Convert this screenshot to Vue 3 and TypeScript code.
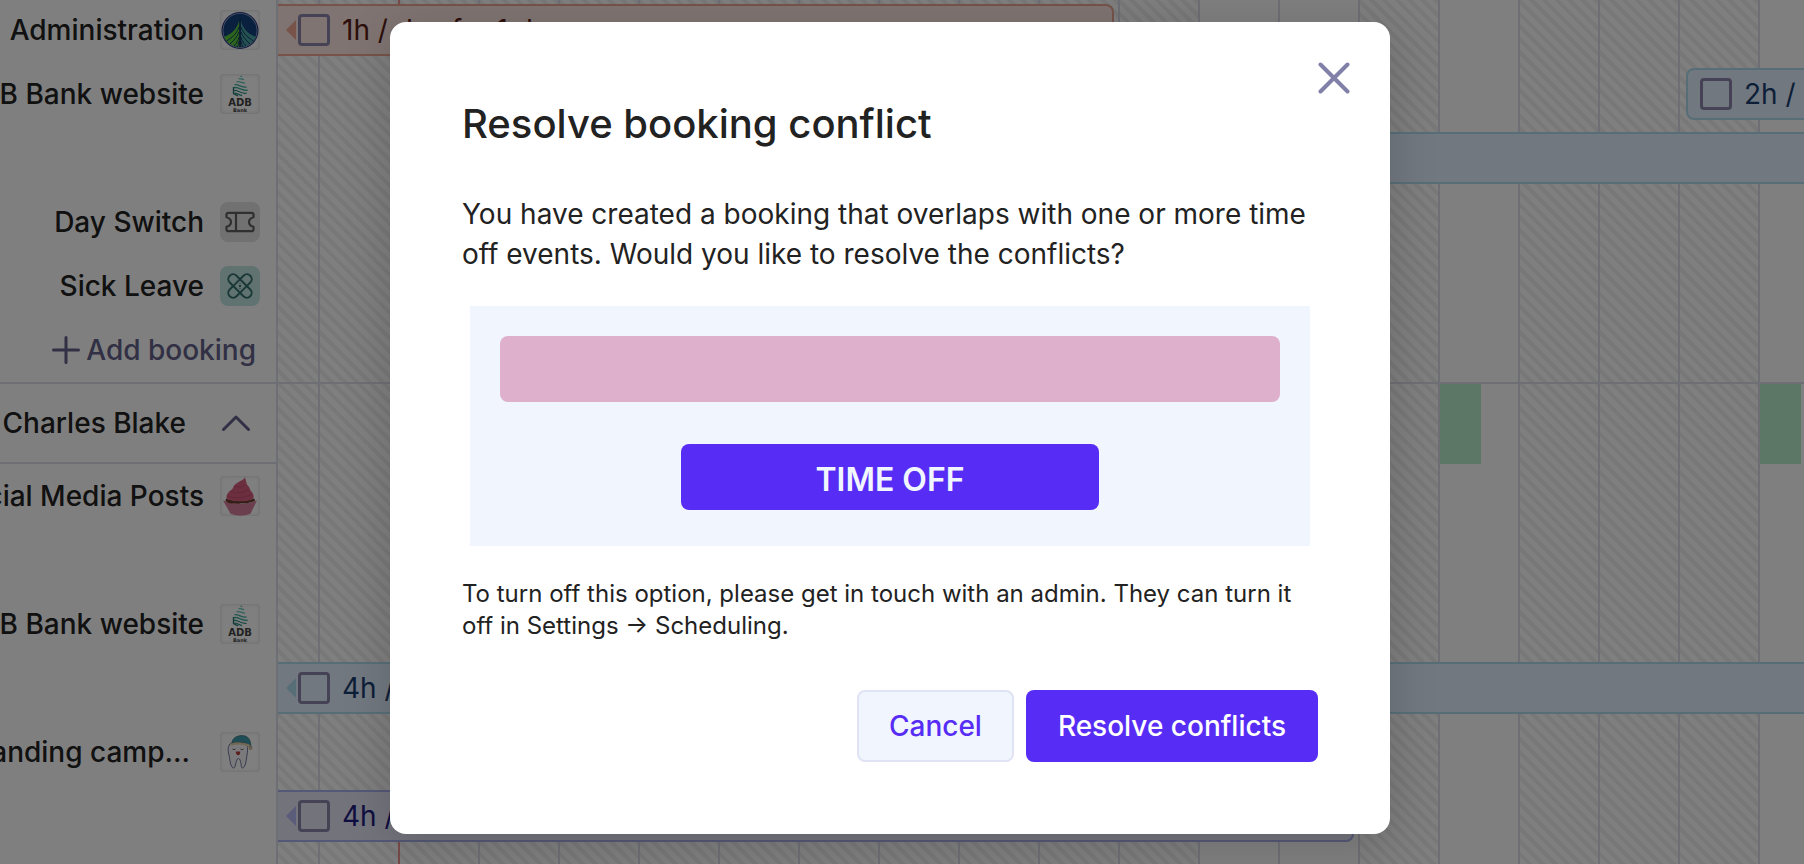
<script setup lang="ts">
interface Bar {
  start: number
  span: number
  tone: 'orange' | 'blue' | 'violet'
  label?: string
  fromPast?: boolean
  toFuture?: boolean
}
interface Project {
  name: string
  icon: 'forest' | 'bank' | 'ticket' | 'plaster' | 'cupcake' | 'tooth'
  lanes: Bar[][]
  clipped?: boolean
}

// Geometry of the schedule: the first visible day is cut by the sidebar.
const FIRST_DAY = 42
const DAY = 80

const openDays = [12, 13, 15]
const days = Array.from({ length: 19 }, (_, i) => ({ hatched: !openDays.includes(i) }))

const availability = [14, 18].map((i) => FIRST_DAY + i * DAY)

const firstGroup: Project[] = [
  {
    name: 'Administration',
    icon: 'forest',
    lanes: [[{ start: 0, span: 836, tone: 'orange', label: '1h / day for 1 day', fromPast: true }]],
  },
  {
    name: 'ADB Bank website',
    icon: 'bank',
    lanes: [
      [{ start: 1408, span: 400, tone: 'blue', label: '2h / day' }],
      [{ start: 448, span: 1360, tone: 'blue', toFuture: true }],
    ],
  },
  { name: 'Day Switch', icon: 'ticket', lanes: [[]] },
  { name: 'Sick Leave', icon: 'plaster', lanes: [[]] },
]

const secondGroup: Project[] = [
  { name: 'Social Media Posts', icon: 'cupcake', lanes: [[], []] },
  {
    name: 'ADB Bank website',
    icon: 'bank',
    lanes: [
      [],
      [{ start: 0, span: 1800, tone: 'blue', label: '4h / day', fromPast: true, toFuture: true }],
    ],
  },
  {
    name: 'Branding camp...',
    icon: 'tooth',
    clipped: true,
    lanes: [[], [{ start: 0, span: 1076, tone: 'violet', label: '4h / day', fromPast: true }]],
  },
]

const groups = [
  { id: 'first', projects: firstGroup, person: '' },
  { id: 'second', projects: secondGroup, person: 'Charles Blake' },
]
</script>

<template>
  <div class="screen">
    <main class="board">
      <div class="days" aria-hidden="true">
        <div
          v-for="(day, i) in days"
          :key="i"
          class="day"
          :class="{ hatched: day.hatched, first: i === 0 }"
        ></div>
      </div>

      <div class="rows">
        <section v-for="group in groups" :key="group.id">
          <div v-if="group.person" class="row">
            <header class="side person-side">
              <h2 class="person-name">{{ group.person }}</h2>
              <button class="icon-button" type="button" aria-label="Collapse">
                <svg class="chevron" viewBox="0 0 28 16" aria-hidden="true">
                  <path d="M1.500 14.500 14 2l12.500 12.500" />
                </svg>
              </button>
            </header>
            <div class="track">
              <span
                v-for="x in availability"
                :key="x"
                class="free"
                :style="{ left: x + 'px' }"
              ></span>
            </div>
          </div>

          <div v-for="(project, p) in group.projects" :key="p" class="row">
            <div class="side">
              <span class="name" :class="{ clipped: project.clipped }">{{ project.name }}</span>
              <span class="avatar" :class="project.icon">
                <svg v-if="project.icon === 'forest'" viewBox="0 0 40 40" aria-hidden="true">
                  <circle cx="20" cy="20.5" r="18.5" fill="#2a3a80" />
                  <circle cx="20" cy="20.5" r="17.3" fill="#b4c4dc" />
                  <circle cx="20" cy="20.5" r="16.7" fill="#12407f" />
                  <path d="M19.5 8c-1 8-5 15-15.500 19a17 17 0 0 0 15.500 10z" fill="#58cc3c" />
                  <path d="M20.5 8c1 8 5 15 15.500 19a17 17 0 0 1-15.500 10z" fill="#48a4a4" />
                  <g fill="none" stroke="#12305f" stroke-width=".9">
                    <path d="M19 17c-2 6-6 10-12.500 14M19 22c-2 5-4.500 8-9 12M19 27c-1 4-2.500 6-5 9M19 31l-1.500 6" />
                    <path d="M21 17c2 6 6 10 12.500 14M21 22c2 5 4.500 8 9 12M21 27c1 4 2.500 6 5 9M21 31l1.500 6" />
                    <path d="M20 8v29" stroke-width="1.600" />
                  </g>
                </svg>
                <svg v-else-if="project.icon === 'bank'" viewBox="0 0 40 40" aria-hidden="true">
                  <g fill="none" stroke-width="1.300">
                    <path d="M20.500 2.200l1.500 .5M18.500 5c2-1 4 .5 5.500 .5M16.500 8c3-1.500 6 1.500 8.500 1" stroke="#5fc4b4" />
                    <path d="M14.500 10.800c4-1 7 3 12 2.200M13.800 13.600c5-1 8 3.500 14 2.600" stroke="#3fae9e" />
                    <path d="M14 16.500c4-.5 7 3.300 12.500 2.800M14.500 19.200c3 0 5 2.300 7.500 2.300" stroke="#2b8f86" />
                    <path d="M13.500 13v6.500l4.500 2.500" stroke="#23736f" />
                  </g>
                  <text class="logo-name" x="20" y="32">ADB</text>
                  <text class="logo-sub" x="20" y="38">Bank</text>
                </svg>
                <svg v-else-if="project.icon === 'ticket'" viewBox="0 0 40 40" aria-hidden="true">
                  <path
                    d="M8.500 10.800h23a2 2 0 0 1 2 2v2.400c-3 .8-4.500 2.500-4.500 4.800s1.500 4 4.500 4.800v2.400a2 2 0 0 1-2 2h-23a2 2 0 0 1-2-2v-2.400c3-.8 4.500-2.500 4.500-4.800s-1.500-4-4.500-4.800v-2.400a2 2 0 0 1 2-2zM16 11v18"
                    fill="none"
                    stroke="#606062"
                    stroke-width="2.200"
                    stroke-linejoin="round"
                  />
                </svg>
                <svg v-else-if="project.icon === 'plaster'" viewBox="0 0 40 40" aria-hidden="true">
                  <g fill="none" stroke="#35716f" stroke-width="2">
                    <rect x="5.500" y="15.200" width="29" height="9.600" rx="4.800" transform="rotate(45 20 20)" />
                    <path d="m16.600 16.600 6.900-6.900a4.800 4.800 0 0 1 6.800 6.800l-6.900 6.900M23.400 23.400l-6.900 6.900a4.800 4.800 0 0 1-6.800-6.800l6.900-6.900" />
                    <path d="m16.600 23.400 6.800-6.800" stroke-width="0" />
                  </g>
                  <circle cx="20" cy="20" r="1.200" fill="#35716f" />
                  <circle cx="20" cy="17.500" r=".6" fill="#35716f" />
                  <circle cx="20" cy="22.500" r=".6" fill="#35716f" />
                </svg>
                <svg v-else-if="project.icon === 'cupcake'" viewBox="0 0 40 40" aria-hidden="true">
                  <path d="M3 24.500c10 4 24 4 34 0l-6.500 13.200a26 26 0 0 1-20 0z" fill="#d87f9e" />
                  <path d="M6 22.500c8 3 20 3 28.500 0l.5 2.500c-3 1.500-5 1-7 2-3 1-6-.5-8 .5-3 1-5-1-8 0-3 0-5-1.500-6.500-2.500z" fill="#6b3d2c" />
                  <path d="M25 1.200c-1 3-8 4.500-10.500 8-2 2.500-1 3-3.500 5-3 2-4.500 4-4.500 7 0 2 1 2.500 2.500 2.500 8 2 16 2 22.500 0 2-1 2.500-2.500 2-4.500-.5-3-3-3.500-3.500-6-.5-3-3-3.500-3.500-6C26 5 25.500 3.500 25 1.200z" fill="#d85e80" />
                  <path d="M14 10c4 2 8 1 11-1M10.500 15c6 3 13 2 18.500-1.500M8 20c8 3 17 2 24-2" fill="none" stroke="#bc4669" stroke-width=".7" />
                </svg>
                <svg v-else viewBox="0 0 40 40" aria-hidden="true">
                  <path
                    d="M11 11c-3 2-3.500 7-2 12 1 4 1 12 4.500 13 2.500.5 2-9.500 5-9.500s2 10 4 9.500c3.500-1 3.500-8 4.500-13 1-6 1-10-2-12.500z"
                    fill="#f4f4fa"
                    stroke="#70759a"
                    stroke-width="1"
                  />
                  <path d="M12 11c0-5 5-7.500 10-7.500 6 0 9 4 9 12l-2-3.500c-5-2-11-2.500-17-1z" fill="#3d9bab" stroke="#35636e" stroke-width=".6" />
                  <path d="M11.500 12.500c6-2 13-1 18 1.500" fill="none" stroke="#e2cfa4" stroke-width="2.200" stroke-linecap="round" />
                  <circle cx="30.500" cy="16" r="1.500" fill="#e2cfa4" stroke="#8d7850" stroke-width=".5" />
                  <path d="M12.500 17c1 .8 2 .8 3 0M20.500 17c1 .8 2 .8 3 0" fill="none" stroke="#4a3b3b" stroke-width=".9" />
                  <path d="M15.800 19.500h4.500c0 2-.8 3.800-2.200 3.800s-2.300-1.800-2.300-3.800z" fill="#b83f3a" />
                </svg>
              </span>
            </div>
            <div class="lanes">
              <div v-for="(lane, l) in project.lanes" :key="l" class="lane">
                <div
                  v-for="(bar, b) in lane"
                  :key="b"
                  class="bar"
                  :class="[bar.tone, { past: bar.fromPast, future: bar.toFuture }]"
                  :style="{ marginLeft: bar.start + 'px', width: bar.span + 'px' }"
                >
                  <svg v-if="bar.fromPast" class="arrow" viewBox="0 0 10 20" aria-hidden="true">
                    <path d="M10 0v20L0 10z" />
                  </svg>
                  <label v-if="bar.label" class="bar-label">
                    <input class="check" type="checkbox" />
                    <span>{{ bar.label }}</span>
                  </label>
                </div>
              </div>
            </div>
          </div>

          <div v-if="group.id === 'first'" class="row add-row">
            <div class="side">
              <button class="add" type="button">
                <svg class="plus" viewBox="0 0 28 28" aria-hidden="true">
                  <path d="M14 1.500v25M1.500 14h25" />
                </svg>
                Add booking
              </button>
            </div>
            <div class="lanes"></div>
          </div>
        </section>
        <div class="row filler">
          <div class="side"></div>
        </div>
      </div>
    </main>

    <div class="overlay">
      <div class="dialog" role="dialog" aria-modal="true" aria-labelledby="dialog-title">
        <button class="close" type="button" aria-label="Close">
          <svg viewBox="0 0 32 32" aria-hidden="true">
            <path d="M2.500 2.500l27 27M29.500 2.500l-27 27" />
          </svg>
        </button>
        <h1 id="dialog-title" class="title">Resolve booking conflict</h1>
        <p class="message">
          You have created a booking that overlaps with one or more time off events. Would you like
          to resolve the conflicts?
        </p>
        <div class="illustration">
          <div class="booking-strip"></div>
          <div class="time-off">TIME OFF</div>
        </div>
        <p class="hint">
          To turn off this option, please get in touch with an admin. They can turn it off in
          Settings → Scheduling.
        </p>
        <div class="actions">
          <button class="button secondary" type="button">Cancel</button>
          <button class="button primary" type="button">Resolve conflicts</button>
        </div>
      </div>
    </div>
  </div>
</template>

<style>
body {
  margin: 0;
  background: #fff;
}
</style>

<style scoped>
* {
  box-sizing: border-box;
}

.screen {
  display: grid;
  grid-template-rows: minmax(0, 1fr);
  height: 100vh;
  overflow: hidden;
  font-family: Inter, "Liberation Sans", sans-serif;
  font-size: 28px;
  line-height: 40px;
  color: #222;
}

button {
  font: inherit;
  border: 0;
  background: none;
  padding: 0;
  cursor: pointer;
}

.screen > * {
  grid-area: 1 / 1;
  min-width: 0;
  min-height: 0;
}

/* Schedule */
.board {
  display: grid;
  grid-template-columns: 278px 1fr;
  grid-template-rows: minmax(0, 1fr);
  overflow: hidden;
}

.days {
  grid-area: 1 / 2;
  display: flex;
  min-width: 0;
  overflow: hidden;
}

.day {
  flex: 0 0 80px;
  border-right: 2px solid #dcdcea;
}

.day.first {
  flex-basis: 42px;
}

.day.hatched {
  background: repeating-linear-gradient(45deg, #fff 0 5px, #f1f1f1 5px 9px);
}

.day:nth-child(2) {
  border-color: #ee9490;
}

.rows {
  grid-area: 1 / 1 / 2 / 3;
  display: flex;
  flex-direction: column;
  min-width: 0;
  margin-top: -2px;
}

.row {
  display: grid;
  grid-template-columns: 278px 1fr;
}

.filler {
  flex: 1;
}

.side {
  display: flex;
  justify-content: flex-end;
  align-items: flex-start;
  min-width: 0;
  padding: 12px 16px 12px 0;
  border-right: 2px solid #dcdcea;
  background: #fff;
  font-weight: 500;
  white-space: nowrap;
}

.name {
  flex: none;
}

.name.clipped {
  padding-right: 14px;
}

.avatar {
  flex: none;
  width: 40px;
  height: 40px;
  margin-left: 16px;
  border-radius: 4px;
  background: #fff;
  box-shadow: inset 0 0 4px #d2d2d2;
}

.avatar svg {
  display: block;
}

.ticket {
  border-radius: 8px;
  background: #e2e2e2;
  box-shadow: none;
}

.plaster {
  border-radius: 8px;
  background: #c3e6e2;
  box-shadow: none;
}

.logo-name,
.logo-sub {
  text-anchor: middle;
  font-family: "DejaVu Sans", sans-serif;
  font-weight: 700;
  fill: #444;
}

.logo-name {
  font-size: 10px;
}

.logo-sub {
  font-size: 5px;
}

.add-row {
  border-bottom: 2px solid #dcdcea;
}

.add-row .side {
  padding-right: 20px;
}

.add {
  display: flex;
  align-items: center;
  gap: 6px;
  color: #626088;
  font-weight: 500;
}

.plus {
  width: 28px;
  height: 28px;
}

.plus path,
.chevron path {
  fill: none;
  stroke: #626088;
  stroke-width: 3;
  stroke-linecap: round;
  stroke-linejoin: round;
}

.person-side {
  align-items: center;
  height: 80px;
  padding: 0 26px 0 0;
  border-bottom: 2px solid #dcdcea;
}

.person-name {
  flex: none;
  margin: 0;
  font-size: 28px;
  font-weight: 500;
}

.icon-button {
  display: flex;
  margin-left: 36px;
}

.chevron {
  width: 28px;
  height: 16px;
}

.track {
  position: relative;
  overflow: hidden;
}

.free {
  position: absolute;
  top: 0;
  bottom: 0;
  width: 41px;
  background: #b8eeca;
}

.lanes {
  min-width: 0;
  overflow: hidden;
}

.lane {
  display: flex;
  height: 64px;
  padding: 6px 0;
}

.bar {
  flex: none;
  display: flex;
  align-items: center;
  height: 52px;
  padding-left: 12px;
  border: 2px solid;
  border-radius: 8px;
  font-weight: 400;
  white-space: nowrap;
}

.bar.past {
  padding-left: 8px;
  border-left: 0;
  border-top-left-radius: 0;
  border-bottom-left-radius: 0;
}

.bar.future {
  border-right: 0;
  border-top-right-radius: 0;
  border-bottom-right-radius: 0;
}

.orange {
  background: #ffe8e4;
  border-color: #eea692;
  color: #5a2014;
}

.blue {
  background: #e2f1fe;
  border-color: #b0dcee;
  color: #1b3f70;
}

.violet {
  background: #e6e6f8;
  border-color: #abb0ee;
  color: #1c1c80;
}

.arrow {
  width: 10px;
  height: 20px;
  margin-right: 2px;
}

.orange .arrow {
  fill: #eea692;
}

.blue .arrow {
  fill: #b0dcee;
}

.violet .arrow {
  fill: #b4b8f4;
}

.bar-label {
  display: flex;
  align-items: center;
  gap: 12px;
}

.check {
  appearance: none;
  flex: none;
  width: 32px;
  height: 32px;
  margin: 0;
  border: 3px solid #8884a8;
  border-radius: 4px;
}

/* Dialog */
.overlay {
  position: relative;
  display: flex;
  justify-content: center;
  align-items: flex-start;
  padding: 22px 24px 0 0;
  background: rgba(0, 0, 0, 0.5);
}

.dialog {
  position: relative;
  width: 1000px;
  max-width: 100%;
  padding: 80px 72px 72px;
  border-radius: 16px;
  background: #fff;
  box-shadow: 0 8px 48px rgba(0, 0, 0, 0.16);
}

.close {
  position: absolute;
  top: 40px;
  right: 40px;
  display: flex;
}

.close svg {
  width: 32px;
  height: 32px;
}

.close path {
  fill: none;
  stroke: #8080a8;
  stroke-width: 4;
  stroke-linecap: round;
}

.title {
  margin: 0 0 48px;
  font-size: 40px;
  line-height: 44px;
  font-weight: 500;
}

.message {
  margin: 0 0 32px;
}

.illustration {
  display: flex;
  flex-direction: column;
  align-items: center;
  gap: 42px;
  height: 240px;
  margin: 0 8px 32px;
  padding: 30px;
  background: #f1f5fe;
}

.booking-strip {
  width: 100%;
  height: 66px;
  border-radius: 8px;
  background: #dfb0cb;
}

.time-off {
  width: 418px;
  height: 66px;
  border-radius: 8px;
  background: #572df5;
  color: #f1f5fe;
  font-size: 32px;
  line-height: 72px;
  font-weight: 600;
  text-align: center;
}

.hint {
  margin: 0 0 48px;
  font-size: 24px;
  line-height: 32px;
}

.actions {
  display: flex;
  justify-content: flex-end;
  gap: 12px;
}

.button {
  height: 72px;
  padding: 0 32px;
  border-radius: 8px;
  font-weight: 500;
}

.secondary {
  padding: 0 30px;
  border: 2px solid #dfe3f4;
  background: #f1f5fe;
  color: #572df5;
}

.primary {
  background: #572df5;
  color: #fff;
}
</style>
